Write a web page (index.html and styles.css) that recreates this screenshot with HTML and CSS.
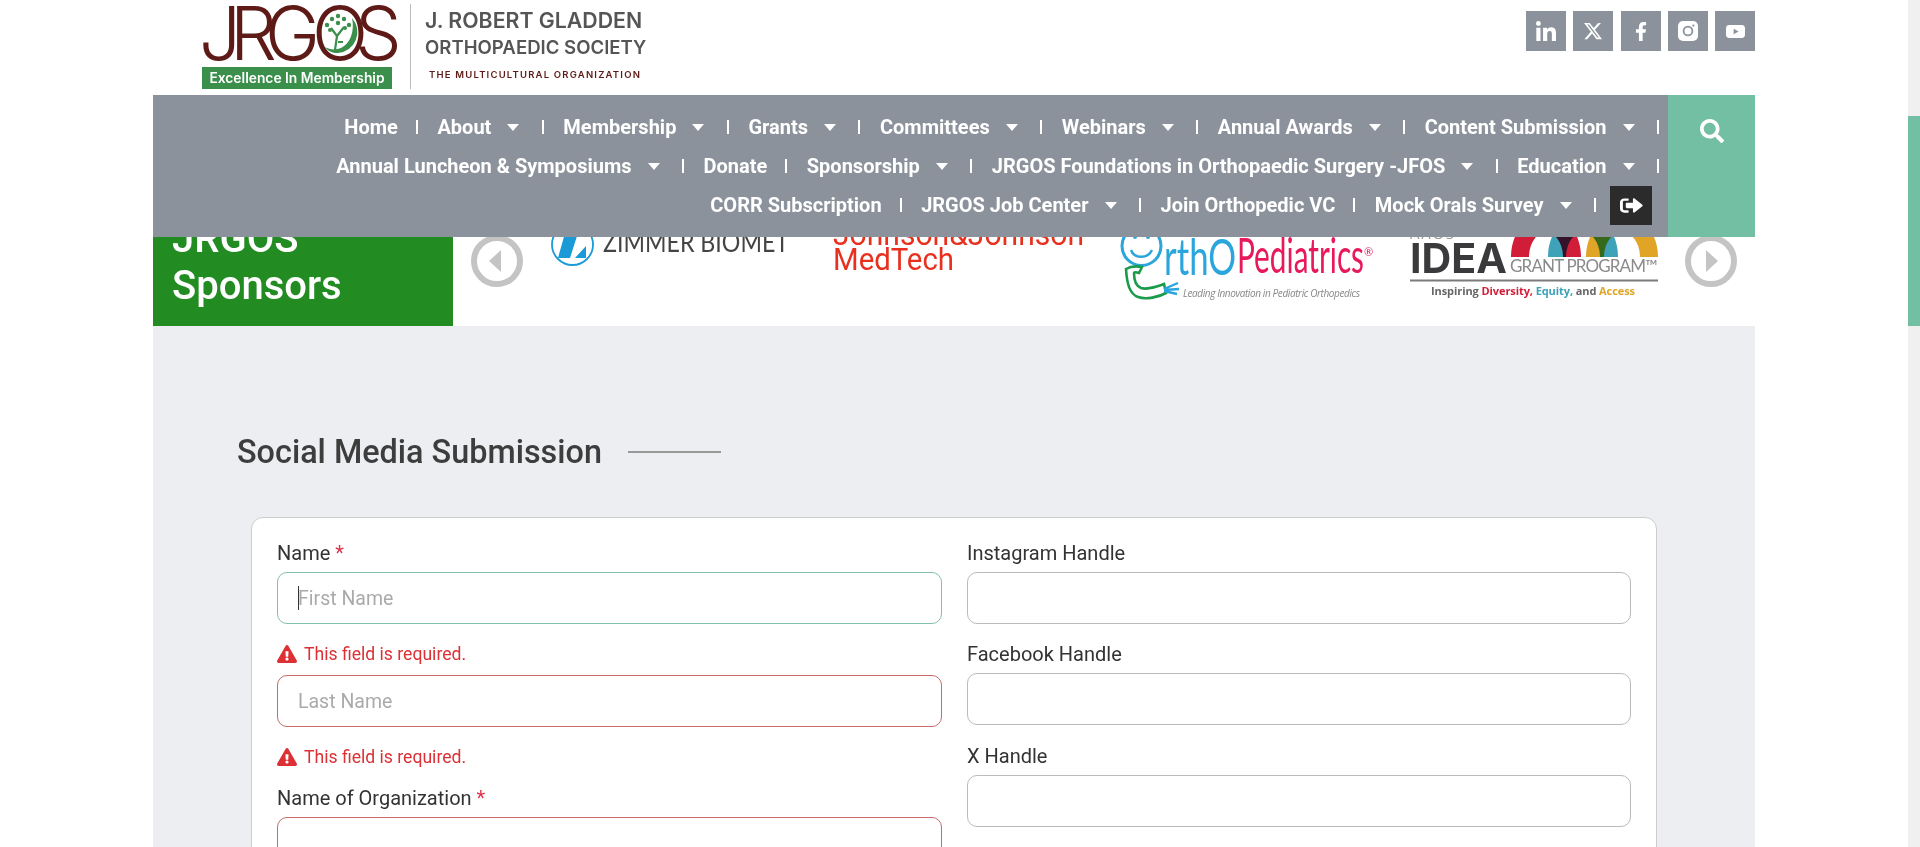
FILE: index.html
```html
<!DOCTYPE html>
<html lang="en">

<head>
    <meta charset="UTF-8">
    <meta name="viewport" content="width=device-width, initial-scale=1.0">
    <title>Social Media Submission</title>
    <link rel="stylesheet" href="styles.css">
</head>

<body>
    <div class="page">
        <div class="wrap">
            <header class="top">
                <a class="brand" href="#">
                    <div class="brand-mark">
                        <svg width="196" height="60" viewBox="0 0 196 60">
                            <text class="mark-word" x="-3 28 63 110 153" y="56">JRGOS</text>
                            <path d="M150 14a21 21 0 0 1-14 35c-6 0-10-2-13-6 5 3 11 3 16 1 9-4 14-17 11-30z" fill="#3a8f4b"/>
                            <path d="M133 46l2-14-6-8M135 32l7-9M135 46l6 0M136 38l5 0" stroke="#3a8f4b" stroke-width="2.2" fill="none"/>
                            <g fill="#3a8f4b">
                                <circle cx="125" cy="21" r="2.2"/><circle cx="130" cy="15" r="2.2"/><circle cx="136" cy="12" r="2.2"/>
                                <circle cx="142" cy="15" r="2.2"/><circle cx="147" cy="21" r="2.2"/><circle cx="136" cy="19" r="2.2"/>
                                <circle cx="143" cy="24" r="2"/><circle cx="128" cy="26" r="2"/>
                            </g>
                        </svg>
                        <span class="brand-tag">Excellence In Membership</span>
                    </div>
                    <div class="brand-name">
                        <span class="name-line">J. ROBERT GLADDEN</span>
                        <span class="name-line name-line-two">ORTHOPAEDIC SOCIETY</span>
                        <span class="name-sub">THE MULTICULTURAL ORGANIZATION</span>
                    </div>
                </a>
                <div class="social">
                    <a href="#"><svg width="22" height="20" viewBox="0 0 448 448"><path d="M100.28 448H7.4V148.9h92.88zM53.79 108.1C24.09 108.1 0 83.5 0 53.8a53.79 53.79 0 0 1 107.58 0c0 29.7-24.1 54.3-53.79 54.3zM447.9 448h-92.68V302.4c0-34.7-.7-79.2-48.29-79.2-48.29 0-55.69 37.7-55.69 76.7V448h-92.78V148.9h89.08v40.8h1.3c12.4-23.5 42.69-48.3 87.88-48.3 94 0 111.28 61.9 111.28 142.3V448z"/></svg></a>
                    <a href="#"><svg width="20" height="20" viewBox="0 0 24 24"><path d="M18.244 2.25h3.308l-7.227 8.26 8.502 11.24H16.17l-5.214-6.817L4.99 21.75H1.68l7.73-8.835L1.254 2.25H8.08l4.713 6.231zm-1.161 17.52h1.833L7.084 4.126H5.117z"/></svg></a>
                    <a href="#"><svg width="12" height="19" viewBox="0 0 320 512"><path d="M279.14 288l14.22-92.66h-88.91v-60.13c0-25.35 12.42-50.06 52.24-50.06h40.42V6.26S260.43 0 225.36 0c-73.22 0-121.08 44.38-121.08 124.72v70.62H22.89V288h81.39v224h100.17V288z"/></svg></a>
                    <a href="#"><svg width="20" height="20" viewBox="0 0 20 20"><rect width="20" height="20" rx="5"/><circle cx="10" cy="10" r="4.4" fill="none" stroke="#8b929b" stroke-width="1.8"/><circle cx="15.4" cy="4.6" r="1.1" fill="#8b929b"/></svg></a>
                    <a href="#"><svg width="19" height="13" viewBox="0 0 19 13"><rect width="19" height="13" rx="3.4"/><path d="M7.6 3.7l5 2.8-5 2.8z" fill="#8b929b"/></svg></a>
                </div>
            </header>

            <nav class="main-nav">
                <ul class="menu">
                    <li><a href="#">Home</a></li>
                    <li><a href="#">About</a><span class="caret"></span></li>
                    <li><a href="#">Membership</a><span class="caret"></span></li>
                    <li><a href="#">Grants</a><span class="caret"></span></li>
                    <li><a href="#">Committees</a><span class="caret"></span></li>
                    <li><a href="#">Webinars</a><span class="caret"></span></li>
                    <li><a href="#">Annual Awards</a><span class="caret"></span></li>
                    <li><a href="#">Content Submission</a><span class="caret"></span></li>
                    <li><a href="#">Annual Luncheon &amp; Symposiums</a><span class="caret"></span></li>
                    <li><a href="#">Donate</a></li>
                    <li><a href="#">Sponsorship</a><span class="caret"></span></li>
                    <li><a href="#">JRGOS Foundations in Orthopaedic Surgery -JFOS</a><span class="caret"></span></li>
                    <li><a href="#">Education</a><span class="caret"></span></li>
                    <li><a href="#">CORR Subscription</a></li>
                    <li><a href="#">JRGOS Job Center</a><span class="caret"></span></li>
                    <li><a href="#">Join Orthopedic VC</a></li>
                    <li><a href="#">Mock Orals Survey</a><span class="caret"></span></li>
                    <li class="menu-logout">
                        <a class="logout" href="#"><svg width="23" height="19" viewBox="0 0 512 512" preserveAspectRatio="none"><path d="M497 273L329 441c-15 15-41 4.5-41-17v-96H152c-13.3 0-24-10.7-24-24v-96c0-13.3 10.7-24 24-24h136V88c0-21.4 25.9-32 41-17l168 168c9.3 9.4 9.3 24.6 0 34zM192 436v-40c0-6.6-5.4-12-12-12H96c-17.7 0-32-14.3-32-32V160c0-17.7 14.3-32 32-32h84c6.6 0 12-5.4 12-12V76c0-6.6-5.4-12-12-12H96c-53 0-96 43-96 96v192c0 53 43 96 96 96h84c6.6 0 12-5.4 12-12z"/></svg></a>
                    </li>
                </ul>
                <a class="search-btn" href="#"><svg width="24" height="24" viewBox="0 0 512 512"><path d="M505 442.7L405.3 343c-4.5-4.5-10.6-7-17-7H372c27.6-35.3 44-79.7 44-128C416 93.1 322.9 0 208 0S0 93.1 0 208s93.1 208 208 208c48.3 0 92.7-16.4 128-44v16.3c0 6.4 2.5 12.5 7 17l99.7 99.7c9.4 9.4 24.6 9.4 33.9 0l28.3-28.3c9.4-9.4 9.4-24.6.1-34zM208 336c-70.7 0-128-57.2-128-128 0-70.7 57.2-128 128-128 70.7 0 128 57.2 128 128 0 70.7-57.2 128-128 128z"/></svg></a>
            </nav>

            <section class="sponsors">
                <div class="sponsors-title">
                    <h2>JRGOS<br>Sponsors</h2>
                </div>
                <div class="carousel">
                    <svg class="arrow" width="52" height="89" viewBox="0 0 52 89"><circle cx="26" cy="24" r="23" fill="none" stroke="#c4c4c4" stroke-width="6"/><path d="M30 13v22L18 24z" fill="#c4c4c4"/></svg>
                    <div class="track">
                        <div class="slot">
                            <svg width="238" height="89" viewBox="0 0 238 89">
                                <circle cx="21.5" cy="7.5" r="20.5" fill="#fff" stroke="#1a9bd7" stroke-width="1.8"/>
                                <path d="M14 -4h13L19 21H7zM35 9v12H24z" fill="#1a9bd7"/>
                                <text class="logo-zimmer" x="52" y="15" textLength="186" lengthAdjust="spacingAndGlyphs">ZIMMER BIOMET</text>
                            </svg>
                        </div>
                        <div class="slot">
                            <svg width="252" height="89" viewBox="-1 0 252 89">
                                <text class="logo-jj" x="0" y="8" textLength="251" lengthAdjust="spacingAndGlyphs">Johnson&amp;Johnson</text>
                                <text class="logo-jj" x="0" y="33" textLength="121" lengthAdjust="spacingAndGlyphs">MedTech</text>
                            </svg>
                        </div>
                        <div class="slot">
                            <svg width="254" height="89" viewBox="-2 0 254 89">
                                <circle cx="19.5" cy="9" r="19.5" fill="none" stroke="#2aa6dc" stroke-width="3"/>
                                <path d="M9 13c3 9 17 9 21 0" fill="none" stroke="#2aa6dc" stroke-width="2.4"/>
                                <circle cx="13" cy="0" r="2" fill="#2aa6dc"/><circle cx="26" cy="0" r="2" fill="#2aa6dc"/>
                                <text class="logo-ortho" x="42" y="38" textLength="72" lengthAdjust="spacingAndGlyphs">rthO</text>
                                <text class="logo-pedia" x="115" y="36" textLength="127" lengthAdjust="spacingAndGlyphs">Pediatrics</text>
                                <text class="logo-reg" x="242" y="19">®</text>
                                <path d="M4 32c5-3 11-3 16-2l-3 6c-3-1-5-1-5 0 0 7 2 13 7 15 6 2 14-1 23-4l2 9c-7 4-20 7-28 4-8-3-11-12-12-28z" fill="none" stroke="#1a9b4b" stroke-width="2.6"/>
                                <path d="M42 52l14-6M42 53l15-1M42 54l13 3" stroke="#2aa6dc" stroke-width="2.4"/>
                                <text class="logo-tagline" x="61" y="60" textLength="177">Leading Innovation in Pediatric Orthopedics</text>
                            </svg>
                        </div>
                        <div class="slot">
                            <svg width="250" height="89" viewBox="0 0 250 89">
                                <text class="logo-aaos" x="0" y="2" textLength="44">AAOS</text>
                                <g fill="none" stroke-width="18">
                                    <path class="arch" d="M110 20a26 34 0 0 1 52 0" stroke="#d21d38"/>
                                    <path class="arch" d="M147 20a26 34 0 0 1 52 0" stroke="#3ea2b8"/>
                                    <path class="arch" d="M185 20a27 34 0 0 1 54 0" stroke="#e0a526"/>
                                </g>
                                <text class="logo-idea" x="0" y="36" textLength="97" lengthAdjust="spacingAndGlyphs">IDEA</text>
                                <text class="logo-grant" x="100" y="35" textLength="148">GRANT PROGRAM™</text>
                                <path d="M0 43.5h248" stroke="#7b7b7b" stroke-width="2"/>
                                <text class="logo-inspire" x="21" y="58" textLength="204">Inspiring <tspan fill="#d21d38">Diversity,</tspan> <tspan fill="#3ea2b8">Equity,</tspan> and <tspan fill="#e0a526">Access</tspan></text>
                            </svg>
                        </div>
                    </div>
                    <svg class="arrow arrow-next" width="52" height="89" viewBox="0 0 52 89"><circle cx="26" cy="24" r="23" fill="none" stroke="#c4c4c4" stroke-width="6"/><path d="M21 13v22l12-11z" fill="#c4c4c4"/></svg>
                </div>
            </section>

            <main class="content">
                <h1 class="page-title">Social Media Submission</h1>
                <form class="form-card">
                    <div class="form-col form-col-left">
                        <div class="field">
                            <label for="firstName">Name <span class="req">*</span></label>
                            <input class="input is-focus" type="text" id="firstName" placeholder="First Name">
                            <p class="error"><svg width="20" height="18" viewBox="0 0 576 512"><path d="M569.517 440.013C587.975 472.007 564.806 512 527.94 512H48.054c-36.937 0-59.999-40.055-41.577-71.987L246.423 24.028c18.467-32.009 64.72-31.951 83.154 0l239.94 416.001zM288 354c-25.405 0-46 20.595-46 46s20.595 46 46 46 46-20.595 46-46-20.595-46-46-46zm-43.673-165.346l7.418 136c.347 6.364 5.609 11.346 11.982 11.346h48.546c6.373 0 11.635-4.982 11.982-11.346l7.418-136c.375-6.874-5.098-12.654-11.982-12.654h-63.383c-6.884 0-12.356 5.78-11.981 12.654z"/></svg>This field is required.</p>
                            <input class="input is-error" type="text" placeholder="Last Name">
                            <p class="error"><svg width="20" height="18" viewBox="0 0 576 512"><path d="M569.517 440.013C587.975 472.007 564.806 512 527.94 512H48.054c-36.937 0-59.999-40.055-41.577-71.987L246.423 24.028c18.467-32.009 64.72-31.951 83.154 0l239.94 416.001zM288 354c-25.405 0-46 20.595-46 46s20.595 46 46 46 46-20.595 46-46-20.595-46-46-46zm-43.673-165.346l7.418 136c.347 6.364 5.609 11.346 11.982 11.346h48.546c6.373 0 11.635-4.982 11.982-11.346l7.418-136c.375-6.874-5.098-12.654-11.982-12.654h-63.383c-6.884 0-12.356 5.78-11.981 12.654z"/></svg>This field is required.</p>
                        </div>
                        <div class="field">
                            <label for="org">Name of Organization <span class="req">*</span></label>
                            <input class="input is-error" type="text" id="org">
                        </div>
                    </div>
                    <div class="form-col">
                        <div class="field">
                            <label for="instagram">Instagram Handle</label>
                            <input class="input" type="text" id="instagram">
                        </div>
                        <div class="field">
                            <label for="facebook">Facebook Handle</label>
                            <input class="input" type="text" id="facebook">
                        </div>
                        <div class="field">
                            <label for="xHandle">X Handle</label>
                            <input class="input" type="text" id="xHandle">
                        </div>
                    </div>
                </form>
            </main>
        </div>

        <div class="scrollbar">
            <div class="scroll-thumb"></div>
        </div>
    </div>
</body>

</html>
```

FILE: styles.css
```css
html,
body {
    margin: 0;
    height: 100%;
    overflow: hidden;
    background-color: #fff;
    font-family: Roboto, "Liberation Sans", sans-serif;
}

.page {
    display: flex;
    height: 847px;
    overflow: hidden;
}

.wrap {
    width: 1602px;
    margin-left: 153px;
    margin-right: 153px;
    flex-shrink: 0;
}

.scrollbar {
    width: 12px;
    height: 847px;
    background-color: #f0f0f0;
    padding-top: 116px;
    box-sizing: border-box;
}

.scroll-thumb {
    height: 210px;
    background-color: #73bfa3;
}

/* header */
.top {
    display: flex;
    justify-content: space-between;
    height: 95px;
    box-sizing: border-box;
}

.brand {
    display: flex;
    margin-left: 49px;
    text-decoration: none;
}

.brand-mark {
    width: 208px;
    height: 85px;
    margin-top: 4px;
    border-right: 1px solid #bbb;
    box-sizing: content-box;
}

.brand-mark svg {
    display: block;
    margin-bottom: 3px;
    overflow: visible;
}

.mark-word {
    font-family: Inter, sans-serif;
    font-weight: 300;
    font-size: 74px;
    fill: #5e1a16;
}

.brand-tag {
    display: block;
    width: 190px;
    height: 22px;
    line-height: 22px;
    background-color: #3a8f4b;
    color: #fff;
    font-family: Inter, sans-serif;
    font-size: 13.8px;
    font-weight: 600;
    text-align: center;
}

.brand-name {
    display: flex;
    flex-direction: column;
    margin-left: 14px;
    padding-top: 8px;
    font-family: Inter, sans-serif;
    color: #555;
}

.name-line {
    font-size: 21.3px;
    font-weight: 600;
    line-height: 24px;
    white-space: nowrap;
}

.name-line-two {
    font-size: 18.6px;
    line-height: 30px;
}

.name-sub {
    margin-top: 7px;
    margin-left: 4px;
    font-size: 9.5px;
    font-weight: 600;
    letter-spacing: 1.2px;
    color: #5e1a16;
    white-space: nowrap;
}

.social {
    display: flex;
    gap: 7.25px;
    padding-top: 11px;
}

.social a {
    display: flex;
    align-items: center;
    justify-content: center;
    width: 40px;
    height: 40px;
    background-color: #8b929b;
}

.social svg {
    fill: #fff;
}

/* menu */
.main-nav {
    display: flex;
    height: 142px;
}

.menu {
    flex: 1;
    display: flex;
    flex-wrap: wrap;
    justify-content: flex-end;
    align-content: center;
    margin: 0;
    padding: 0 9px 0 0;
    list-style: none;
    background-color: #8b929b;
}

.menu li {
    display: flex;
    align-items: center;
    height: 39px;
    margin-left: 19.5px;
    font-size: 20px;
    font-weight: 700;
}

.menu li::after {
    content: "";
    width: 2px;
    height: 14px;
    margin-left: 18px;
    background-color: #fff;
}

.menu a {
    color: #fff;
    text-decoration: none;
}

.caret {
    width: 0;
    height: 0;
    margin-left: 16px;
    margin-right: 4.5px;
    border-left: 6px solid transparent;
    border-right: 6px solid transparent;
    border-top: 7px solid #fff;
}

.menu .menu-logout {
    margin-left: 14px;
    margin-right: 7px;
}

.menu .menu-logout::after {
    display: none;
}

.logout {
    display: flex;
    align-items: center;
    justify-content: center;
    width: 42px;
    height: 39px;
    background-color: #2b2b2b;
}

.logout svg {
    fill: #fff;
}

.search-btn {
    display: flex;
    justify-content: center;
    width: 87px;
    padding-top: 24px;
    box-sizing: border-box;
    background-color: #73bfa3;
}

.search-btn svg {
    fill: #fff;
}

/* sponsors */
.sponsors {
    display: flex;
    height: 89px;
    overflow: hidden;
    background-color: #fff;
}

.sponsors-title {
    display: flex;
    flex-direction: column;
    justify-content: flex-end;
    width: 300px;
    padding-left: 19px;
    box-sizing: border-box;
    background-color: #228b22;
}

.sponsors-title h2 {
    margin: 0 0 17px;
    color: #fff;
    font-size: 40px;
    font-weight: 500;
    line-height: 47px;
}

.carousel {
    flex: 1;
    display: flex;
    padding: 0 18px;
}

.arrow {
    flex-shrink: 0;
}

.arrow-next {
    margin-left: 6px;
}

.track {
    flex: 1;
    display: flex;
    margin-left: 3px;
}

.slot {
    flex: 1;
    display: flex;
    justify-content: center;
}

.logo-zimmer {
    font-family: Lato, sans-serif;
    font-weight: 400;
    font-size: 27px;
    fill: #444;
}

.logo-jj {
    font-family: Roboto, sans-serif;
    font-weight: 400;
    font-size: 31px;
    fill: #e8301f;
}

.logo-ortho {
    font-family: Lato, sans-serif;
    font-weight: 400;
    font-size: 50px;
    fill: #2aa6dc;
}

.logo-pedia {
    font-family: Lato, sans-serif;
    font-weight: 400;
    font-size: 48px;
    fill: #e8195b;
}

.logo-reg {
    font-family: Lato, sans-serif;
    font-size: 11px;
    fill: #e8195b;
}

.logo-tagline {
    font-family: "Open Sans", sans-serif;
    font-style: italic;
    font-size: 10px;
    fill: #888;
}

.arch {
    mix-blend-mode: multiply;
}

.logo-aaos {
    font-family: "Open Sans", sans-serif;
    font-size: 15px;
    fill: #999;
}

.logo-idea {
    font-family: Inter, sans-serif;
    font-weight: 700;
    font-size: 41px;
    fill: #3a3a3c;
}

.logo-grant {
    font-family: Lato, sans-serif;
    font-size: 17px;
    fill: #8a8a8a;
}

.logo-inspire {
    font-family: "Open Sans", sans-serif;
    font-weight: 700;
    font-size: 11px;
    fill: #666;
}

/* form */
.content {
    height: 521px;
    padding-top: 108px;
    box-sizing: border-box;
    background-color: #edeef2;
}

.page-title {
    display: flex;
    align-items: center;
    margin: 0 0 46.5px 84px;
    color: #3d3d3d;
    font-size: 32.4px;
    font-weight: 500;
    line-height: 36px;
}

.page-title::after {
    content: "";
    width: 93px;
    height: 2px;
    margin-left: 26px;
    background-color: #999;
}

.form-card {
    display: grid;
    grid-template-columns: 665px 664px;
    column-gap: 25px;
    height: 600px;
    margin: 0 98px 0 98px;
    padding: 25px 26px 0 25px;
    border: 1px solid #ccc;
    border-radius: 12px;
    box-sizing: border-box;
    background-color: #fff;
}

.form-col-left {
    padding-top: 0.5px;
}

.field {
    margin-bottom: 20.5px;
}

.field label {
    display: block;
    height: 21px;
    margin-bottom: 8px;
    color: #333;
    font-size: 20px;
    line-height: 21px;
}

.req {
    color: #e0314b;
}

.input {
    display: block;
    width: 100%;
    height: 52px;
    padding: 0 20px;
    border: 1px solid #bbb;
    border-radius: 10px;
    box-sizing: border-box;
    outline: none;
    background-color: #fff;
    font-family: Roboto, sans-serif;
    font-size: 19.5px;
    color: #333;
}

.input::placeholder {
    color: #aaa;
}

.is-focus {
    border-color: #86bfa8;
    background-image: linear-gradient(#333, #333);
    background-repeat: no-repeat;
    background-size: 1px 24px;
    background-position: 20px center;
}

.is-error {
    border-color: #c96b6b;
}

.error {
    display: flex;
    align-items: center;
    gap: 7px;
    height: 20px;
    margin: 20px 0 11px;
    color: #dc3035;
    font-size: 17.6px;
    line-height: 20px;
}

.error svg {
    fill: #dc3035;
    flex-shrink: 0;
}

.field .error:last-child {
    margin-bottom: 0;
}
```
